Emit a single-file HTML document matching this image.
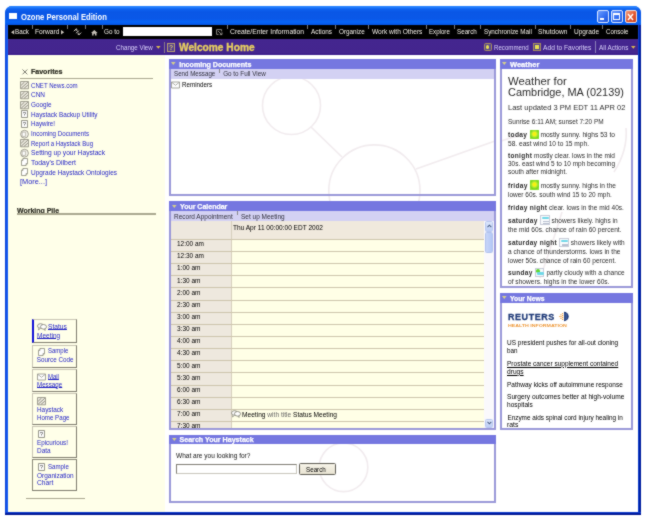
<!DOCTYPE html>
<html><head><meta charset="utf-8">
<style>
*{margin:0;padding:0;box-sizing:border-box}
html,body{width:650px;height:524px;overflow:hidden;background:#fff;font-family:"Liberation Sans",sans-serif}
#w{position:absolute;left:0;top:0;width:650px;height:524px;background:#fff;filter:url(#f)}
.a{position:absolute}
.t{position:absolute;white-space:nowrap}
.u{text-decoration:underline}
.ic{display:inline-block;vertical-align:middle}
svg{position:absolute;overflow:visible}
.t b{letter-spacing:0.3px}

</style></head><body>
<svg width="0" height="0" style="position:absolute"><filter id="f" x="0" y="0" width="100%" height="100%" color-interpolation-filters="sRGB"><feConvolveMatrix order="3" kernelMatrix="1 2 1 2 16 2 1 2 1" edgeMode="duplicate"/></filter></svg>
<div id="w">
<div class="a" style="left:5.00px;top:6.00px;width:636.00px;height:509.00px;background:linear-gradient(#0A55E6,#0A55E6);border-radius:7px 7px 0 0"></div>
<div class="a" style="left:5.00px;top:24.00px;width:3.00px;height:491.00px;background:linear-gradient(90deg,#0A3CCC,#1456EC 50%,#1A5EF4)"></div>
<div class="a" style="left:638.00px;top:24.00px;width:3.00px;height:491.00px;background:linear-gradient(90deg,#1448D8,#0024A8 50%,#001A98)"></div>
<div class="a" style="left:5.00px;top:512.00px;width:636.00px;height:3.00px;background:linear-gradient(#1448DC,#001CA0 55%,#000E84)"></div>
<div class="a" style="left:5.00px;top:6.00px;width:636.00px;height:19.00px;border-radius:7px 7px 0 0;background:linear-gradient(#1F7BFF 0px,#2A86FF 1px,#0E62F0 3px,#0A57E6 6px,#0A58E8 13px,#0665F7 16px,#0558EA 18px)"></div>
<div class="a" style="left:8.80px;top:12.90px;width:8.70px;height:6.00px;background:#fff"></div>
<div class="t" id="t0" style="left:21.20px;top:12.30px;line-height:10px;font-size:9.1px;font-weight:bold;color:#fff;transform:scaleX(0.841);transform-origin:0 50%;">Ozone Personal Edition</div>
<div class="a" style="left:596.60px;top:10.20px;width:12.30px;height:12.40px;background:linear-gradient(135deg,#6A9CFF,#2F6BF0 60%,#2457D8);border:1px solid #DDE8FF;border-radius:2px"></div>
<div class="a" style="left:599.50px;top:18.20px;width:4.00px;height:1.80px;background:#fff"></div>
<div class="a" style="left:610.80px;top:10.20px;width:12.20px;height:12.40px;background:linear-gradient(135deg,#6A9CFF,#2F6BF0 60%,#2457D8);border:1px solid #DDE8FF;border-radius:2px"></div>
<div class="a" style="left:613.30px;top:13.00px;width:7.20px;height:6.80px;border:1px solid #fff;border-top-width:2px"></div>
<div class="a" style="left:624.90px;top:10.20px;width:11.70px;height:12.40px;background:linear-gradient(135deg,#F29A7A,#E2582F 55%,#C8401E);border:1px solid #F5E0D8;border-radius:2px"></div>
<svg style="left:627px;top:12.5px" width="7" height="8"><path d="M1 1L6 7M6 1L1 7" stroke="#fff" stroke-width="1.4"/></svg>
<div class="a" style="left:8.00px;top:24.50px;width:630.00px;height:14.00px;background:#000"></div>
<svg style="left:11px;top:30px" width="4" height="5"><path d="M3.2 0L0 2.2L3.2 4.4Z" fill="#C8C2B8"/></svg>
<div class="t" id="t1" style="left:15.00px;top:27.40px;line-height:10px;font-size:6.4px;font-weight:normal;color:#F4F0E8;transform:scaleX(0.985);transform-origin:0 50%;">Back</div>
<div class="t" id="t2" style="left:35.00px;top:27.40px;line-height:10px;font-size:6.4px;font-weight:normal;color:#F4F0E8;transform:scaleX(1.040);transform-origin:0 50%;">Forward</div>
<svg style="left:61.2px;top:30px" width="4" height="5"><path d="M0 0L3.2 2.2L0 4.4Z" fill="#C8C2B8"/></svg>
<svg style="left:72.7px;top:28.3px" width="9" height="8"><path d="M0.8 3.2L3.2 0.8L4.6 2.2M3.2 0.8V3M5.8 2.6L4.2 4.4M8.2 4.6L5.8 7L4.4 5.6M5.8 7V4.8M3.2 5.2L4.8 3.4" stroke="#C8C2B8" stroke-width="1" fill="none"/></svg>
<svg style="left:90.8px;top:29.5px" width="7" height="6"><path d="M0 3L3.3 0L6.6 3H5.5V5.5H4V3.8H2.6V5.5H1.1V3Z" fill="#C8C2B8"/></svg>
<div class="t" id="t3" style="left:104.30px;top:27.40px;line-height:10px;font-size:6.4px;font-weight:normal;color:#F4F0E8;transform:scaleX(0.991);transform-origin:0 50%;">Go to</div>
<div class="a" style="left:122.60px;top:27.10px;width:89.80px;height:9.10px;background:#fff"></div>
<svg style="left:215.7px;top:29px" width="7" height="6"><path d="M0.6 0.6H5.6V2.4M0.6 0.6V5.4H2.6M2 2L5.8 5.6M6 3.4V5.6H3.8" stroke="#9A968E" stroke-width="0.9" fill="none"/></svg>
<div class="a" style="left:31.80px;top:24.70px;width:1.00px;height:4.20px;background:#7a7a7a"></div>
<div class="a" style="left:67.20px;top:24.70px;width:1.00px;height:4.20px;background:#7a7a7a"></div>
<div class="a" style="left:84.90px;top:24.70px;width:1.00px;height:4.20px;background:#7a7a7a"></div>
<div class="a" style="left:101.80px;top:24.70px;width:1.00px;height:4.20px;background:#7a7a7a"></div>
<div class="a" style="left:226.90px;top:24.70px;width:1.00px;height:4.20px;background:#7a7a7a"></div>
<div class="a" style="left:307.40px;top:24.70px;width:1.00px;height:4.20px;background:#7a7a7a"></div>
<div class="a" style="left:335.20px;top:24.70px;width:1.00px;height:4.20px;background:#7a7a7a"></div>
<div class="a" style="left:368.10px;top:24.70px;width:1.00px;height:4.20px;background:#7a7a7a"></div>
<div class="a" style="left:425.50px;top:24.70px;width:1.00px;height:4.20px;background:#7a7a7a"></div>
<div class="a" style="left:453.80px;top:24.70px;width:1.00px;height:4.20px;background:#7a7a7a"></div>
<div class="a" style="left:480.10px;top:24.70px;width:1.00px;height:4.20px;background:#7a7a7a"></div>
<div class="a" style="left:534.80px;top:24.70px;width:1.00px;height:4.20px;background:#7a7a7a"></div>
<div class="a" style="left:570.30px;top:24.70px;width:1.00px;height:4.20px;background:#7a7a7a"></div>
<div class="a" style="left:601.70px;top:24.70px;width:1.00px;height:4.20px;background:#7a7a7a"></div>
<div class="t" id="t4" style="left:230.30px;top:27.40px;line-height:10px;font-size:6.4px;font-weight:normal;color:#F4F0E8;transform:scaleX(1.059);transform-origin:0 50%;">Create/Enter Information</div>
<div class="t" id="t5" style="left:311.00px;top:27.40px;line-height:10px;font-size:6.4px;font-weight:normal;color:#F4F0E8;">Actions</div>
<div class="t" id="t6" style="left:339.00px;top:27.40px;line-height:10px;font-size:6.4px;font-weight:normal;color:#F4F0E8;transform:scaleX(0.991);transform-origin:0 50%;">Organize</div>
<div class="t" id="t7" style="left:371.60px;top:27.40px;line-height:10px;font-size:6.4px;font-weight:normal;color:#F4F0E8;transform:scaleX(1.031);transform-origin:0 50%;">Work with Others</div>
<div class="t" id="t8" style="left:429.00px;top:27.40px;line-height:10px;font-size:6.4px;font-weight:normal;color:#F4F0E8;transform:scaleX(0.960);transform-origin:0 50%;">Explore</div>
<div class="t" id="t9" style="left:457.20px;top:27.40px;line-height:10px;font-size:6.4px;font-weight:normal;color:#F4F0E8;transform:scaleX(0.978);transform-origin:0 50%;">Search</div>
<div class="t" id="t10" style="left:483.80px;top:27.40px;line-height:10px;font-size:6.4px;font-weight:normal;color:#F4F0E8;transform:scaleX(0.982);transform-origin:0 50%;">Synchronize Mail</div>
<div class="t" id="t11" style="left:538.00px;top:27.40px;line-height:10px;font-size:6.4px;font-weight:normal;color:#F4F0E8;transform:scaleX(1.034);transform-origin:0 50%;">Shutdown</div>
<div class="t" id="t12" style="left:573.80px;top:27.40px;line-height:10px;font-size:6.4px;font-weight:normal;color:#F4F0E8;transform:scaleX(1.020);transform-origin:0 50%;">Upgrade</div>
<div class="t" id="t13" style="left:605.50px;top:27.40px;line-height:10px;font-size:6.4px;font-weight:normal;color:#F4F0E8;transform:scaleX(0.959);transform-origin:0 50%;">Console</div>
<div class="a" style="left:8.00px;top:38.50px;width:630.00px;height:16.00px;background:linear-gradient(#44268F,#44258E 85%,#3A1C8A)"></div>
<div class="t" id="t14" style="left:116.00px;top:42.70px;line-height:10px;font-size:6.4px;font-weight:normal;color:#DAD2FA;transform:scaleX(0.971);transform-origin:0 50%;">Change View</div>
<svg style="left:155.5px;top:45.5px" width="5" height="4"><path d="M0 0H4.6L2.3 2.8Z" fill="#D8B850"/></svg>
<div class="a" style="left:163.90px;top:41.50px;width:1.00px;height:11.00px;background:#8A7C88"></div>
<div class="a" style="left:166.80px;top:42.50px;width:8.00px;height:9.20px;border:1px solid #B8A070;background:#54408E"></div>
<div class="t" id="t15" style="left:168.60px;top:42.80px;line-height:10px;font-size:7px;font-weight:bold;color:#D8C070;transform:scaleX(0.981);transform-origin:0 50%;">?</div>
<div class="t" id="t16" style="left:178.50px;top:42.00px;line-height:10px;font-size:10.6px;font-weight:bold;color:#E8D060;transform:scaleX(0.961);transform-origin:0 50%;-webkit-text-stroke:0.35px #E8D060">Welcome Home</div>
<div class="a" style="left:483.60px;top:42.50px;width:8.00px;height:8.80px;border:1px solid #A89058;background:#5A4A90;border-radius:1.5px"></div>
<div class="a" style="left:485.80px;top:45.00px;width:3.60px;height:3.60px;background:#E8E050;border-radius:50%"></div>
<div class="t" id="t17" style="left:494.00px;top:42.70px;line-height:10px;font-size:6.4px;font-weight:normal;color:#DAD2FA;transform:scaleX(0.960);transform-origin:0 50%;">Recommend</div>
<div class="a" style="left:533.10px;top:42.50px;width:7.90px;height:8.80px;border:1px solid #A89058;background:#5A4A90"></div>
<div class="a" style="left:535.30px;top:44.80px;width:3.50px;height:4.20px;background:#E8E050"></div>
<div class="t" id="t18" style="left:543.20px;top:42.70px;line-height:10px;font-size:6.4px;font-weight:normal;color:#DAD2FA;transform:scaleX(1.040);transform-origin:0 50%;">Add to Favorites</div>
<div class="a" style="left:595.00px;top:41.00px;width:1.00px;height:12.00px;background:#8C80B8"></div>
<div class="t" id="t19" style="left:598.90px;top:42.70px;line-height:10px;font-size:6.4px;font-weight:normal;color:#DAD2FA;transform:scaleX(0.994);transform-origin:0 50%;">All Actions</div>
<svg style="left:631px;top:45.5px" width="5" height="4"><path d="M0 0H4.6L2.3 2.8Z" fill="#D8B850"/></svg>
<div class="a" style="left:8.00px;top:54.50px;width:630.00px;height:457.50px;background:#fff"></div>
<div class="a" style="left:8.00px;top:54.50px;width:157.30px;height:457.50px;background:#FFFFE9"></div>
<svg style="left:21.5px;top:68.6px" width="6" height="6"><path d="M0.5 0.5L5.3 5.3M5.3 0.5L0.5 5.3" stroke="#6a6a60" stroke-width="0.9"/></svg>
<div class="t" id="t20" style="left:30.90px;top:66.80px;line-height:10px;font-size:7.1px;font-weight:bold;color:#2a2a20;-webkit-text-stroke:0.2px #2a2a20">Favorites</div>
<div class="a" style="left:20.30px;top:77.50px;width:132.90px;height:1.20px;background:#A9A78F"></div>
<svg style="left:20.2px;top:81.3px" width="9" height="8"><path d="M0.5 0.5H8.5V7.8H0.5Z" fill="#ECEADF" stroke="#8C8A7C" stroke-width="0.8"/><path d="M1.2 7.2L7.8 1.2M1.2 4.2L4.4 1.2M4.2 7.2L7.8 4.2" stroke="#7C7A6C" stroke-width="0.8" fill="none"/></svg>
<div class="t" id="t21" style="left:31.20px;top:80.70px;line-height:10px;font-size:6.3px;font-weight:normal;color:#1E1EC4;transform:scaleX(0.969);transform-origin:0 50%;">CNET News.com</div>
<svg style="left:20.2px;top:90.89999999999999px" width="9" height="8"><path d="M0.5 0.5H8.5V7.8H0.5Z" fill="#ECEADF" stroke="#8C8A7C" stroke-width="0.8"/><path d="M1.2 7.2L7.8 1.2M1.2 4.2L4.4 1.2M4.2 7.2L7.8 4.2" stroke="#7C7A6C" stroke-width="0.8" fill="none"/></svg>
<div class="t" id="t22" style="left:31.20px;top:90.30px;line-height:10px;font-size:6.3px;font-weight:normal;color:#1E1EC4;transform:scaleX(1.025);transform-origin:0 50%;">CNN</div>
<svg style="left:20.2px;top:100.6px" width="9" height="8"><path d="M0.5 0.5H8.5V7.8H0.5Z" fill="#ECEADF" stroke="#8C8A7C" stroke-width="0.8"/><path d="M1.2 7.2L7.8 1.2M1.2 4.2L4.4 1.2M4.2 7.2L7.8 4.2" stroke="#7C7A6C" stroke-width="0.8" fill="none"/></svg>
<div class="t" id="t23" style="left:31.20px;top:100.00px;line-height:10px;font-size:6.3px;font-weight:normal;color:#1E1EC4;transform:scaleX(1.009);transform-origin:0 50%;">Google</div>
<svg style="left:20.2px;top:110.3px" width="9" height="8"><path d="M1.5 0.5H7.5V7.5H1.5Z" fill="#fff" stroke="#7c7c70" stroke-width="0.8"/><text x="4.5" y="6.3" font-size="6" font-family="Liberation Sans" text-anchor="middle" fill="#444">?</text></svg>
<div class="t" id="t24" style="left:31.20px;top:109.70px;line-height:10px;font-size:6.3px;font-weight:normal;color:#1E1EC4;transform:scaleX(1.011);transform-origin:0 50%;">Haystack Backup Utility</div>
<svg style="left:20.2px;top:119.89999999999999px" width="9" height="8"><path d="M1.5 0.5H7.5V7.5H1.5Z" fill="#fff" stroke="#7c7c70" stroke-width="0.8"/><text x="4.5" y="6.3" font-size="6" font-family="Liberation Sans" text-anchor="middle" fill="#444">?</text></svg>
<div class="t" id="t25" style="left:31.20px;top:119.30px;line-height:10px;font-size:6.3px;font-weight:normal;color:#1E1EC4;transform:scaleX(0.980);transform-origin:0 50%;">Haywire!</div>
<svg style="left:20.2px;top:129.5px" width="9" height="9"><circle cx="4.5" cy="4.2" r="3.9" fill="#F2F0E8" stroke="#8C8A7C" stroke-width="0.8"/><path d="M2.2 2.2H5.4V6.4H2.2Z" fill="#fff" stroke="#9C9A8C" stroke-width="0.6"/></svg>
<div class="t" id="t26" style="left:31.20px;top:128.90px;line-height:10px;font-size:6.3px;font-weight:normal;color:#1E1EC4;transform:scaleX(0.980);transform-origin:0 50%;">Incoming Documents</div>
<svg style="left:20.2px;top:139.20000000000002px" width="9" height="8"><path d="M0.5 0.5H8.5V7.8H0.5Z" fill="#ECEADF" stroke="#8C8A7C" stroke-width="0.8"/><path d="M1.2 7.2L7.8 1.2M1.2 4.2L4.4 1.2M4.2 7.2L7.8 4.2" stroke="#7C7A6C" stroke-width="0.8" fill="none"/></svg>
<div class="t" id="t27" style="left:31.20px;top:138.60px;line-height:10px;font-size:6.3px;font-weight:normal;color:#1E1EC4;transform:scaleX(0.958);transform-origin:0 50%;">Report a Haystack Bug</div>
<svg style="left:20.2px;top:148.8px" width="9" height="9"><circle cx="4.5" cy="4.2" r="3.9" fill="#F2F0E8" stroke="#8C8A7C" stroke-width="0.8"/><path d="M2.2 2.2H5.4V6.4H2.2Z" fill="#fff" stroke="#9C9A8C" stroke-width="0.6"/></svg>
<div class="t" id="t28" style="left:31.20px;top:148.20px;line-height:10px;font-size:6.3px;font-weight:normal;color:#1E1EC4;transform:scaleX(1.057);transform-origin:0 50%;">Setting up your Haystack</div>
<svg style="left:20.2px;top:158.4px" width="9" height="8"><path d="M3 0.5H7.5V5.5L6 7.5H1.5V2.5Z" fill="#fff" stroke="#8a8a7c" stroke-width="0.8"/><path d="M1.5 2.5H3V0.5M7.5 5.5H6V7.5" stroke="#8a8a7c" stroke-width="0.7" fill="none"/></svg>
<div class="t" id="t29" style="left:31.20px;top:157.80px;line-height:10px;font-size:6.3px;font-weight:normal;color:#1E1EC4;transform:scaleX(1.095);transform-origin:0 50%;">Today's Dilbert</div>
<svg style="left:20.2px;top:168.10000000000002px" width="9" height="8"><path d="M3 0.5H7.5V5.5L6 7.5H1.5V2.5Z" fill="#fff" stroke="#8a8a7c" stroke-width="0.8"/><path d="M1.5 2.5H3V0.5M7.5 5.5H6V7.5" stroke="#8a8a7c" stroke-width="0.7" fill="none"/></svg>
<div class="t" id="t30" style="left:31.20px;top:167.50px;line-height:10px;font-size:6.3px;font-weight:normal;color:#1E1EC4;transform:scaleX(1.028);transform-origin:0 50%;">Upgrade Haystack Ontologies</div>
<div class="t" id="t31" style="left:20.30px;top:177.20px;line-height:10px;font-size:6.3px;font-weight:normal;color:#1E1EC4;transform:scaleX(1.169);transform-origin:0 50%;">[More...]</div>
<div class="t" id="t32" style="left:17.10px;top:206.30px;line-height:10px;font-size:7.1px;font-weight:bold;color:#2a2a20;transform:scaleX(0.983);transform-origin:0 50%;-webkit-text-stroke:0.2px #2a2a20">Working Pile</div>
<div class="a" style="left:17.10px;top:213.40px;width:138.60px;height:1.20px;background:#A9A78F"></div>
<div class="a" style="left:32.20px;top:318.80px;width:45.10px;height:24.30px;background:#FFFFE9;border:1px solid #C8C4B4;border-right:1.6px solid #7E7C6E;border-bottom:1.6px solid #7E7C6E;border-left:2.4px solid #1010D8"></div>
<svg style="left:36.8px;top:322.8px" width="10" height="8"><ellipse cx="3.5" cy="3" rx="3" ry="2.3" fill="#fff" stroke="#7c7c70" stroke-width="0.8"/><ellipse cx="6.5" cy="3.8" rx="3" ry="2.3" fill="#fff" stroke="#7c7c70" stroke-width="0.8"/><path d="M2 5L1.5 7L3.5 5.2M7 6L8 7.5L8.2 5.6" stroke="#7c7c70" stroke-width="0.7" fill="#fff"/></svg>
<div class="t" id="t33" style="left:47.90px;top:321.70px;line-height:10px;font-size:6.3px;font-weight:normal;color:#1E1EC4;transform:scaleX(1.058);transform-origin:0 50%;text-decoration:underline;text-underline-offset:0px">Status</div>
<div class="t" id="t34" style="left:36.80px;top:331.10px;line-height:10px;font-size:6.3px;font-weight:normal;color:#1E1EC4;transform:scaleX(1.031);transform-origin:0 50%;text-decoration:underline;text-underline-offset:0px">Meeting</div>
<div class="a" style="left:32.20px;top:344.60px;width:45.10px;height:23.10px;background:#FFFFE9;border:1px solid #C8C4B4;border-right:1.6px solid #7E7C6E;border-bottom:1.6px solid #7E7C6E"></div>
<svg style="left:36.8px;top:347.5px" width="9" height="8"><path d="M3 0.5H7.5V5.5L6 7.5H1.5V2.5Z" fill="#fff" stroke="#8a8a7c" stroke-width="0.8"/><path d="M1.5 2.5H3V0.5M7.5 5.5H6V7.5" stroke="#8a8a7c" stroke-width="0.7" fill="none"/></svg>
<div class="t" id="t35" style="left:47.90px;top:346.40px;line-height:10px;font-size:6.3px;font-weight:normal;color:#1E1EC4;transform:scaleX(0.950);transform-origin:0 50%;">Sample</div>
<div class="t" id="t36" style="left:36.80px;top:355.20px;line-height:10px;font-size:6.3px;font-weight:normal;color:#1E1EC4;">Source Code</div>
<div class="a" style="left:32.20px;top:369.20px;width:45.10px;height:23.20px;background:#FFFFE9;border:1px solid #C8C4B4;border-right:1.6px solid #7E7C6E;border-bottom:1.6px solid #7E7C6E"></div>
<svg style="left:36.8px;top:372.7px" width="9" height="8"><path d="M0.5 1H8.5V7H0.5Z" fill="#fff" stroke="#8E8E84" stroke-width="0.8"/><path d="M0.7 1.3L4.5 4.3L8.3 1.3" stroke="#8E8E84" stroke-width="0.7" fill="none"/></svg>
<div class="t" id="t37" style="left:47.90px;top:371.60px;line-height:10px;font-size:6.3px;font-weight:normal;color:#1E1EC4;transform:scaleX(0.944);transform-origin:0 50%;text-decoration:underline;text-underline-offset:0px">Mail</div>
<div class="t" id="t38" style="left:36.80px;top:379.80px;line-height:10px;font-size:6.3px;font-weight:normal;color:#1E1EC4;transform:scaleX(0.986);transform-origin:0 50%;text-decoration:underline;text-underline-offset:0px">Message</div>
<div class="a" style="left:32.20px;top:393.10px;width:45.10px;height:32.10px;background:#FFFFE9;border:1px solid #C8C4B4;border-right:1.6px solid #7E7C6E;border-bottom:1.6px solid #7E7C6E"></div>
<svg style="left:36.8px;top:396.8px" width="9" height="8"><path d="M0.5 0.5H8.5V7.8H0.5Z" fill="#ECEADF" stroke="#8C8A7C" stroke-width="0.8"/><path d="M1.2 7.2L7.8 1.2M1.2 4.2L4.4 1.2M4.2 7.2L7.8 4.2" stroke="#7C7A6C" stroke-width="0.8" fill="none"/></svg>
<div class="t" id="t39" style="left:36.80px;top:405.20px;line-height:10px;font-size:6.3px;font-weight:normal;color:#1E1EC4;transform:scaleX(1.011);transform-origin:0 50%;">Haystack</div>
<div class="t" id="t40" style="left:36.80px;top:412.80px;line-height:10px;font-size:6.3px;font-weight:normal;color:#1E1EC4;transform:scaleX(0.977);transform-origin:0 50%;">Home Page</div>
<div class="a" style="left:32.20px;top:426.10px;width:45.10px;height:31.70px;background:#FFFFE9;border:1px solid #C8C4B4;border-right:1.6px solid #7E7C6E;border-bottom:1.6px solid #7E7C6E"></div>
<svg style="left:36.8px;top:429.5px" width="9" height="8"><path d="M1.5 0.5H7.5V7.5H1.5Z" fill="#fff" stroke="#7c7c70" stroke-width="0.8"/><text x="4.5" y="6.3" font-size="6" font-family="Liberation Sans" text-anchor="middle" fill="#444">?</text></svg>
<div class="t" id="t41" style="left:36.80px;top:437.90px;line-height:10px;font-size:6.3px;font-weight:normal;color:#1E1EC4;transform:scaleX(0.995);transform-origin:0 50%;">Epicurious!</div>
<div class="t" id="t42" style="left:36.80px;top:445.70px;line-height:10px;font-size:6.3px;font-weight:normal;color:#1E1EC4;transform:scaleX(1.022);transform-origin:0 50%;">Data</div>
<div class="a" style="left:32.20px;top:458.80px;width:45.10px;height:31.90px;background:#FFFFE9;border:1px solid #8a8878;border-right:1.6px solid #7E7C6E;border-bottom:1.6px solid #7E7C6E"></div>
<svg style="left:36.8px;top:462.6px" width="9" height="8"><path d="M1.5 0.5H7.5V7.5H1.5Z" fill="#fff" stroke="#7c7c70" stroke-width="0.8"/><text x="4.5" y="6.3" font-size="6" font-family="Liberation Sans" text-anchor="middle" fill="#444">?</text></svg>
<div class="t" id="t43" style="left:47.90px;top:461.50px;line-height:10px;font-size:6.3px;font-weight:normal;color:#1E1EC4;transform:scaleX(0.974);transform-origin:0 50%;">Sample</div>
<div class="t" id="t44" style="left:36.80px;top:470.50px;line-height:10px;font-size:6.3px;font-weight:normal;color:#1E1EC4;transform:scaleX(1.028);transform-origin:0 50%;">Organization</div>
<div class="t" id="t45" style="left:36.80px;top:478.30px;line-height:10px;font-size:6.3px;font-weight:normal;color:#1E1EC4;transform:scaleX(1.058);transform-origin:0 50%;">Chart</div>
<div class="a" style="left:25.90px;top:497.50px;width:58.70px;height:1.20px;background:#A9A78F"></div>
<svg style="left:0;top:0" width="650" height="524">
<g stroke="#F1EBEE" stroke-width="1.6" fill="none">
<circle cx="291.5" cy="105.5" r="29"/>
<circle cx="374.4" cy="190.5" r="45.6"/>
<path d="M311 127L342 157"/>

<circle cx="343.5" cy="467.3" r="24.3"/>
<path d="M416 169L495 141"/><path d="M501 141L520 135"/><path d="M626 128Q628 150 614 172"/><path d="M562 212Q552 245 540 278"/>
</g></svg>
<div class="a" style="left:169.00px;top:59.10px;width:327.10px;height:136.50px;border:2px solid #9A98D8"></div>
<div class="a" style="left:169.00px;top:59.10px;width:327.10px;height:9.80px;background:#7577E0"></div>
<svg style="left:171.40px;top:62.40px" width="5" height="4"><path d="M0 0H4.6L2.3 3Z" fill="#D6D08A"/></svg>
<div class="t" id="t46" style="left:179.30px;top:59.80px;line-height:10px;font-size:7.1px;font-weight:bold;color:#fff;-webkit-text-stroke:0.25px #fff">Incoming Documents</div>
<div class="a" style="left:171.00px;top:68.90px;width:323.10px;height:10.20px;background:#D3D1F3"></div>
<div class="t" id="t47" style="left:173.90px;top:69.40px;line-height:10px;font-size:6.3px;font-weight:normal;color:#30303C;transform:scaleX(0.983);transform-origin:0 50%;">Send Message</div>
<div class="t" id="t48" style="left:223.20px;top:69.40px;line-height:10px;font-size:6.3px;font-weight:normal;color:#30303C;">Go to Full View</div>
<div class="a" style="left:219.00px;top:69.20px;width:1.00px;height:4.00px;background:#888"></div>
<svg style="left:171.2px;top:80.8px" width="9" height="8"><path d="M0.5 1H8.5V7H0.5Z" fill="#fff" stroke="#8E8E84" stroke-width="0.8"/><path d="M0.7 1.3L4.5 4.3L8.3 1.3" stroke="#8E8E84" stroke-width="0.7" fill="none"/></svg>
<div class="t" id="t49" style="left:181.60px;top:80.20px;line-height:10px;font-size:6.3px;font-weight:normal;color:#000;transform:scaleX(0.988);transform-origin:0 50%;">Reminders</div>
<div class="a" style="left:169.20px;top:201.20px;width:326.90px;height:228.60px;border:2px solid #9A98D8"></div>
<div class="a" style="left:169.20px;top:201.20px;width:326.90px;height:9.90px;background:#7577E0"></div>
<svg style="left:171.60px;top:204.55px" width="5" height="4"><path d="M0 0H4.6L2.3 3Z" fill="#D6D08A"/></svg>
<div class="t" id="t50" style="left:179.50px;top:201.95px;line-height:10px;font-size:7.1px;font-weight:bold;color:#fff;transform:scaleX(0.986);transform-origin:0 50%;-webkit-text-stroke:0.25px #fff">Your Calendar</div>
<div class="a" style="left:171.20px;top:211.10px;width:322.90px;height:10.00px;background:#D3D1F3"></div>
<div class="t" id="t51" style="left:173.90px;top:211.50px;line-height:10px;font-size:6.3px;font-weight:normal;color:#30303C;transform:scaleX(1.030);transform-origin:0 50%;">Record Appointment</div>
<div class="t" id="t52" style="left:240.80px;top:211.50px;line-height:10px;font-size:6.3px;font-weight:normal;color:#30303C;transform:scaleX(1.029);transform-origin:0 50%;">Set up Meeting</div>
<div class="a" style="left:236.80px;top:211.40px;width:1.00px;height:4.00px;background:#888"></div>
<div class="a" style="left:171.10px;top:221.10px;width:313.20px;height:206.90px;background:#FFFFE6"></div>
<div class="a" style="left:171.10px;top:221.10px;width:60.40px;height:206.90px;background:#EEE8DE"></div>
<div class="a" style="left:231.50px;top:221.10px;width:252.80px;height:18.30px;background:#F0E9DD"></div>
<div class="a" style="left:231.00px;top:221.10px;width:1.00px;height:206.90px;background:#D6CFBC"></div>
<div class="t" id="t53" style="left:232.90px;top:222.70px;line-height:10px;font-size:6.3px;font-weight:normal;color:#000;transform:scaleX(1.039);transform-origin:0 50%;">Thu Apr 11 00:00:00 EDT 2002</div>
<div class="a" style="left:171.10px;top:239.00px;width:313.20px;height:1.00px;background:#CDC4AB"></div>
<div class="t" id="t54" style="left:176.60px;top:239.10px;line-height:10px;font-size:6.3px;font-weight:normal;color:#000;transform:scaleX(1.028);transform-origin:0 50%;">12:00 am</div>
<div class="a" style="left:171.10px;top:251.00px;width:313.20px;height:1.00px;background:#CDC4AB"></div>
<div class="t" id="t55" style="left:176.60px;top:251.24px;line-height:10px;font-size:6.3px;font-weight:normal;color:#000;transform:scaleX(1.028);transform-origin:0 50%;">12:30 am</div>
<div class="a" style="left:171.10px;top:263.00px;width:313.20px;height:1.00px;background:#CDC4AB"></div>
<div class="t" id="t56" style="left:176.60px;top:263.38px;line-height:10px;font-size:6.3px;font-weight:normal;color:#000;transform:scaleX(1.032);transform-origin:0 50%;">1:00 am</div>
<div class="a" style="left:171.10px;top:275.00px;width:313.20px;height:1.00px;background:#CDC4AB"></div>
<div class="t" id="t57" style="left:176.60px;top:275.52px;line-height:10px;font-size:6.3px;font-weight:normal;color:#000;transform:scaleX(1.032);transform-origin:0 50%;">1:30 am</div>
<div class="a" style="left:171.10px;top:287.00px;width:313.20px;height:1.00px;background:#CDC4AB"></div>
<div class="t" id="t58" style="left:176.60px;top:287.66px;line-height:10px;font-size:6.3px;font-weight:normal;color:#000;transform:scaleX(1.032);transform-origin:0 50%;">2:00 am</div>
<div class="a" style="left:171.10px;top:300.00px;width:313.20px;height:1.00px;background:#CDC4AB"></div>
<div class="t" id="t59" style="left:176.60px;top:299.80px;line-height:10px;font-size:6.3px;font-weight:normal;color:#000;transform:scaleX(1.032);transform-origin:0 50%;">2:30 am</div>
<div class="a" style="left:171.10px;top:312.00px;width:313.20px;height:1.00px;background:#CDC4AB"></div>
<div class="t" id="t60" style="left:176.60px;top:311.94px;line-height:10px;font-size:6.3px;font-weight:normal;color:#000;transform:scaleX(1.032);transform-origin:0 50%;">3:00 am</div>
<div class="a" style="left:171.10px;top:324.00px;width:313.20px;height:1.00px;background:#CDC4AB"></div>
<div class="t" id="t61" style="left:176.60px;top:324.08px;line-height:10px;font-size:6.3px;font-weight:normal;color:#000;transform:scaleX(1.032);transform-origin:0 50%;">3:30 am</div>
<div class="a" style="left:171.10px;top:336.00px;width:313.20px;height:1.00px;background:#CDC4AB"></div>
<div class="t" id="t62" style="left:176.60px;top:336.22px;line-height:10px;font-size:6.3px;font-weight:normal;color:#000;transform:scaleX(1.032);transform-origin:0 50%;">4:00 am</div>
<div class="a" style="left:171.10px;top:348.00px;width:313.20px;height:1.00px;background:#CDC4AB"></div>
<div class="t" id="t63" style="left:176.60px;top:348.36px;line-height:10px;font-size:6.3px;font-weight:normal;color:#000;transform:scaleX(1.032);transform-origin:0 50%;">4:30 am</div>
<div class="a" style="left:171.10px;top:360.00px;width:313.20px;height:1.00px;background:#CDC4AB"></div>
<div class="t" id="t64" style="left:176.60px;top:360.50px;line-height:10px;font-size:6.3px;font-weight:normal;color:#000;transform:scaleX(1.032);transform-origin:0 50%;">5:00 am</div>
<div class="a" style="left:171.10px;top:372.00px;width:313.20px;height:1.00px;background:#CDC4AB"></div>
<div class="t" id="t65" style="left:176.60px;top:372.64px;line-height:10px;font-size:6.3px;font-weight:normal;color:#000;transform:scaleX(1.032);transform-origin:0 50%;">5:30 am</div>
<div class="a" style="left:171.10px;top:385.00px;width:313.20px;height:1.00px;background:#CDC4AB"></div>
<div class="t" id="t66" style="left:176.60px;top:384.78px;line-height:10px;font-size:6.3px;font-weight:normal;color:#000;transform:scaleX(1.032);transform-origin:0 50%;">6:00 am</div>
<div class="a" style="left:171.10px;top:397.00px;width:313.20px;height:1.00px;background:#CDC4AB"></div>
<div class="t" id="t67" style="left:176.60px;top:396.92px;line-height:10px;font-size:6.3px;font-weight:normal;color:#000;transform:scaleX(1.032);transform-origin:0 50%;">6:30 am</div>
<div class="a" style="left:171.10px;top:409.00px;width:313.20px;height:1.00px;background:#CDC4AB"></div>
<div class="t" id="t68" style="left:176.60px;top:409.06px;line-height:10px;font-size:6.3px;font-weight:normal;color:#000;transform:scaleX(1.032);transform-origin:0 50%;">7:00 am</div>
<div class="a" style="left:171.10px;top:421.00px;width:313.20px;height:1.00px;background:#CDC4AB"></div>
<div class="t" id="t69" style="left:176.60px;top:421.20px;line-height:10px;font-size:6.3px;font-weight:normal;color:#000;transform:scaleX(1.032);transform-origin:0 50%;">7:30 am</div>
<svg style="left:231.4px;top:409.90000000000003px" width="10" height="8"><ellipse cx="3.5" cy="3" rx="3" ry="2.3" fill="#fff" stroke="#7c7c70" stroke-width="0.8"/><ellipse cx="6.5" cy="3.8" rx="3" ry="2.3" fill="#fff" stroke="#7c7c70" stroke-width="0.8"/><path d="M2 5L1.5 7L3.5 5.2M7 6L8 7.5L8.2 5.6" stroke="#7c7c70" stroke-width="0.7" fill="#fff"/></svg>
<div class="t" id="t70" style="left:242.20px;top:409.50px;line-height:10px;font-size:6.3px;font-weight:normal;color:#000;transform:scaleX(1.048);transform-origin:0 50%;">Meeting <span style="color:#666">with title</span> Status Meeting</div>
<div class="a" style="left:484.30px;top:221.10px;width:10.00px;height:206.90px;background:#FAF9FC"></div>
<div class="a" style="left:485.20px;top:221.40px;width:8.20px;height:10.20px;background:linear-gradient(#DCE6FB,#BCCDF6);border:0.6px solid #B8C8F0;border-radius:1.5px"></div>
<svg style="left:487px;top:224.2px" width="5" height="4"><path d="M0.5 3.2L2.4 1.2L4.3 3.2" stroke="#4D6185" stroke-width="1.1" fill="none"/></svg>
<div class="a" style="left:485.20px;top:232.00px;width:8.20px;height:20.50px;background:linear-gradient(90deg,#C8D6F8,#B4C8F6);border:0.6px solid #B0C2EE;border-radius:1.5px"></div>
<div class="a" style="left:485.20px;top:418.60px;width:8.20px;height:9.20px;background:linear-gradient(#DCE6FB,#BCCDF6);border:0.6px solid #B8C8F0;border-radius:1.5px"></div>
<svg style="left:487px;top:421.2px" width="5" height="4"><path d="M0.5 0.8L2.4 2.8L4.3 0.8" stroke="#4D6185" stroke-width="1.1" fill="none"/></svg>
<div class="a" style="left:169.20px;top:434.60px;width:326.90px;height:68.40px;border:2px solid #9A98D8"></div>
<div class="a" style="left:169.20px;top:434.60px;width:326.90px;height:9.30px;background:#7577E0"></div>
<svg style="left:171.60px;top:437.65px" width="5" height="4"><path d="M0 0H4.6L2.3 3Z" fill="#D6D08A"/></svg>
<div class="t" id="t71" style="left:179.50px;top:435.05px;line-height:10px;font-size:7.1px;font-weight:bold;color:#fff;-webkit-text-stroke:0.25px #fff">Search Your Haystack</div>
<div class="t" id="t72" style="left:176.40px;top:450.60px;line-height:10px;font-size:6.3px;font-weight:normal;color:#111;transform:scaleX(1.037);transform-origin:0 50%;">What are you looking for?</div>
<div class="a" style="left:176.40px;top:463.80px;width:121.10px;height:10.10px;background:#fff;border:1px solid #7F7D74;border-bottom-color:#C8C6BC;border-right-color:#C8C6BC"></div>
<div class="a" style="left:299.00px;top:463.20px;width:36.70px;height:12.30px;background:linear-gradient(#F6F3E8,#E8E3D2);border:1px solid #5E5C54;border-radius:1.5px"></div>
<div class="t" id="t73" style="left:306.20px;top:465.10px;line-height:10px;font-size:6.3px;font-weight:normal;color:#000;transform:scaleX(0.992);transform-origin:0 50%;">Search</div>
<div class="a" style="left:499.80px;top:59.30px;width:133.20px;height:229.00px;border:2px solid #9A98D8"></div>
<div class="a" style="left:499.80px;top:59.30px;width:133.20px;height:9.50px;background:#7577E0"></div>
<svg style="left:502.20px;top:62.45px" width="5" height="4"><path d="M0 0H4.6L2.3 3Z" fill="#D6D08A"/></svg>
<div class="t" id="t74" style="left:510.10px;top:59.85px;line-height:10px;font-size:7.1px;font-weight:bold;color:#fff;transform:scaleX(1.055);transform-origin:0 50%;-webkit-text-stroke:0.25px #fff">Weather</div>
<div class="t" id="t75" style="left:508.00px;top:74.30px;line-height:14px;font-size:10.6px;font-weight:normal;color:#2C2C2C;transform:scaleX(1.066);transform-origin:0 50%;">Weather for</div>
<div class="t" id="t76" style="left:508.00px;top:84.90px;line-height:14px;font-size:10.6px;font-weight:normal;color:#2C2C2C;transform:scaleX(1.031);transform-origin:0 50%;">Cambridge, MA (02139)</div>
<div class="t" id="t77" style="left:508.00px;top:103.10px;line-height:10px;font-size:7.6px;font-weight:normal;color:#2C2C2C;transform:scaleX(0.989);transform-origin:0 50%;">Last updated 3 PM EDT 11 APR 02</div>
<div class="t" id="t78" style="left:508.00px;top:116.50px;line-height:10px;font-size:6.4px;font-weight:normal;color:#2C2C2C;transform:scaleX(1.013);transform-origin:0 50%;">Sunrise 6:11 AM; sunset 7:20 PM</div>
<div class="a" style="left:530px;top:129.5px;width:9.2px;height:9.5px;background:radial-gradient(circle at 50% 45%,#FFF200 0,#F0F020 1.8px,#A8E830 3px,#78D818 4.5px,#90E040 6px)"></div>
<div class="t" id="t79" style="left:508.00px;top:130.00px;line-height:10px;font-size:6.4px;font-weight:normal;color:#2C2C2C;transform:scaleX(1.041);transform-origin:0 50%;"><b>today</b> <span class="ic" style="width:9px"></span> mostly sunny. highs 53 to</div>
<div class="t" id="t80" style="left:508.00px;top:139.10px;line-height:10px;font-size:6.4px;font-weight:normal;color:#2C2C2C;transform:scaleX(1.032);transform-origin:0 50%;">58. east wind 10 to 15 mph.</div>
<div class="t" id="t81" style="left:508.00px;top:151.40px;line-height:10px;font-size:6.4px;font-weight:normal;color:#2C2C2C;transform:scaleX(1.018);transform-origin:0 50%;"><b>tonight</b> mostly clear. lows in the mid</div>
<div class="t" id="t82" style="left:508.00px;top:159.20px;line-height:10px;font-size:6.4px;font-weight:normal;color:#2C2C2C;transform:scaleX(1.011);transform-origin:0 50%;">30s. east wind 5 to 10 mph becoming</div>
<div class="t" id="t83" style="left:508.00px;top:166.90px;line-height:10px;font-size:6.4px;font-weight:normal;color:#2C2C2C;transform:scaleX(1.019);transform-origin:0 50%;">south after midnight.</div>
<div class="a" style="left:530px;top:180.1px;width:9.2px;height:9.5px;background:radial-gradient(circle at 50% 45%,#FFF200 0,#F0F020 1.8px,#A8E830 3px,#78D818 4.5px,#90E040 6px)"></div>
<div class="t" id="t84" style="left:508.00px;top:180.60px;line-height:10px;font-size:6.4px;font-weight:normal;color:#2C2C2C;transform:scaleX(1.030);transform-origin:0 50%;"><b>friday</b> <span class="ic" style="width:9px"></span> mostly sunny. highs in the</div>
<div class="t" id="t85" style="left:508.00px;top:190.00px;line-height:10px;font-size:6.4px;font-weight:normal;color:#2C2C2C;transform:scaleX(1.015);transform-origin:0 50%;">lower 60s. south wind 15 to 20 mph.</div>
<div class="t" id="t86" style="left:508.00px;top:202.70px;line-height:10px;font-size:6.4px;font-weight:normal;color:#2C2C2C;transform:scaleX(1.022);transform-origin:0 50%;"><b>friday night</b> clear. lows in the mid 40s.</div>
<div class="a" style="left:540.4px;top:215.39999999999998px;width:9.5px;height:9.5px;background:#FAFCFE;border:0.7px solid #C8CCD8"><div class="a" style="left:1px;top:0.8px;width:7px;height:2.2px;background:#70D8E8;border-radius:1px"></div><div class="a" style="left:1.5px;top:5px;width:6px;height:2.5px;border-top:0.6px dashed #B8C0D0;border-bottom:0.6px dashed #B8C0D0"></div></div>
<div class="t" id="t87" style="left:508.00px;top:215.90px;line-height:10px;font-size:6.4px;font-weight:normal;color:#2C2C2C;transform:scaleX(1.020);transform-origin:0 50%;"><b>saturday</b> <span class="ic" style="width:10px"></span> showers likely. highs in</div>
<div class="t" id="t88" style="left:508.00px;top:225.00px;line-height:10px;font-size:6.4px;font-weight:normal;color:#2C2C2C;transform:scaleX(1.027);transform-origin:0 50%;">the mid 60s. chance of rain 60 percent.</div>
<div class="a" style="left:559.2px;top:237.79999999999998px;width:9.5px;height:9.5px;background:#FAFCFE;border:0.7px solid #C8CCD8"><div class="a" style="left:1px;top:0.8px;width:7px;height:2.2px;background:#70D8E8;border-radius:1px"></div><div class="a" style="left:1.5px;top:5px;width:6px;height:2.5px;border-top:0.6px dashed #B8C0D0;border-bottom:0.6px dashed #B8C0D0"></div></div>
<div class="t" id="t89" style="left:508.00px;top:238.30px;line-height:10px;font-size:6.4px;font-weight:normal;color:#2C2C2C;transform:scaleX(1.017);transform-origin:0 50%;"><b>saturday night</b> <span class="ic" style="width:10px"></span> showers likely with</div>
<div class="t" id="t90" style="left:508.00px;top:247.40px;line-height:10px;font-size:6.4px;font-weight:normal;color:#2C2C2C;transform:scaleX(1.028);transform-origin:0 50%;">a chance of thunderstorms. lows in the</div>
<div class="t" id="t91" style="left:508.00px;top:255.50px;line-height:10px;font-size:6.4px;font-weight:normal;color:#2C2C2C;transform:scaleX(1.031);transform-origin:0 50%;">lower 50s. chance of rain 60 percent.</div>
<div class="a" style="left:534.6px;top:267.59999999999997px;width:9.5px;height:9.5px;background:#F4FAFC;border:0.7px solid #C8CCD8"><div class="a" style="left:0.5px;top:0.5px;width:4px;height:3.5px;background:#60D830;border-radius:50%"></div><div class="a" style="left:1.5px;top:3.5px;width:7px;height:2.5px;background:#70D8E8;border-radius:1px"></div></div>
<div class="t" id="t92" style="left:508.00px;top:268.10px;line-height:10px;font-size:6.4px;font-weight:normal;color:#2C2C2C;transform:scaleX(1.019);transform-origin:0 50%;"><b>sunday</b> <span class="ic" style="width:10px"></span> partly cloudy with a chance</div>
<div class="t" id="t93" style="left:508.00px;top:276.90px;line-height:10px;font-size:6.4px;font-weight:normal;color:#2C2C2C;transform:scaleX(1.035);transform-origin:0 50%;">of showers. highs in the lower 60s.</div>
<div class="a" style="left:499.80px;top:293.30px;width:133.20px;height:136.70px;border:2px solid #9A98D8"></div>
<div class="a" style="left:499.80px;top:293.30px;width:133.20px;height:9.40px;background:#7577E0"></div>
<svg style="left:502.20px;top:296.40px" width="5" height="4"><path d="M0 0H4.6L2.3 3Z" fill="#D6D08A"/></svg>
<div class="t" id="t94" style="left:510.10px;top:293.80px;line-height:10px;font-size:7.1px;font-weight:bold;color:#fff;transform:scaleX(0.957);transform-origin:0 50%;-webkit-text-stroke:0.25px #fff">Your News</div>
<div class="t" id="t95" style="left:508.10px;top:311.60px;line-height:10px;font-size:9px;font-weight:bold;color:#1F3A78;transform:scaleX(0.993);transform-origin:0 50%;-webkit-text-stroke:0.3px #1F3A78;letter-spacing:0.6px">REUTERS</div>
<div class="t" id="t96" style="left:508.10px;top:320.90px;line-height:10px;font-size:4.4px;font-weight:bold;color:#EE9838;transform:scaleX(1.193);transform-origin:0 50%;">HEALTH INFORMATION</div>
<svg style="left:557.5px;top:310.5px" width="11" height="11"><path d="M6 0.8A4.7 4.7 0 0 1 6 10.2Z" fill="#1F3A78"/><path d="M7 2V9M8.4 2.5V8.5" stroke="#6C88C0" stroke-width="0.5"/><g fill="#F0A040"><circle cx="4.6" cy="2.6" r="0.7"/><circle cx="4.6" cy="4.5" r="0.8"/><circle cx="4.6" cy="6.5" r="0.8"/><circle cx="4.6" cy="8.4" r="0.7"/><circle cx="2.9" cy="3.6" r="0.6"/><circle cx="2.9" cy="5.5" r="0.7"/><circle cx="2.9" cy="7.4" r="0.6"/><circle cx="1.4" cy="5.5" r="0.5"/></g></svg>
<div class="t" id="t97" style="left:507.40px;top:338.30px;line-height:10px;font-size:6.4px;font-weight:normal;color:#000;transform:scaleX(1.013);transform-origin:0 50%;">US president pushes for all-out cloning</div>
<div class="t" id="t98" style="left:507.40px;top:345.90px;line-height:10px;font-size:6.4px;font-weight:normal;color:#000;transform:scaleX(0.984);transform-origin:0 50%;">ban</div>
<div class="t" id="t99" style="left:507.40px;top:358.70px;line-height:10px;font-size:6.4px;font-weight:normal;color:#000;transform:scaleX(1.020);transform-origin:0 50%;text-decoration:underline">Prostate cancer supplement contained</div>
<div class="t" id="t100" style="left:507.40px;top:366.70px;line-height:10px;font-size:6.4px;font-weight:normal;color:#000;transform:scaleX(1.038);transform-origin:0 50%;text-decoration:underline">drugs</div>
<div class="t" id="t101" style="left:507.40px;top:379.50px;line-height:10px;font-size:6.4px;font-weight:normal;color:#000;transform:scaleX(1.013);transform-origin:0 50%;">Pathway kicks off autoimmune response</div>
<div class="t" id="t102" style="left:507.40px;top:392.30px;line-height:10px;font-size:6.4px;font-weight:normal;color:#000;transform:scaleX(1.032);transform-origin:0 50%;">Surgery outcomes better at high-volume</div>
<div class="t" id="t103" style="left:507.40px;top:399.90px;line-height:10px;font-size:6.4px;font-weight:normal;color:#000;transform:scaleX(1.022);transform-origin:0 50%;">hospitals</div>
<div class="t" id="t104" style="left:507.40px;top:412.50px;line-height:10px;font-size:6.4px;font-weight:normal;color:#000;">Enzyme aids spinal cord injury healing in</div>
<div class="t" id="t105" style="left:507.40px;top:420.40px;line-height:10px;font-size:6.4px;font-weight:normal;color:#000;transform:scaleX(1.070);transform-origin:0 50%;">rats</div>
</div>
</body></html>
